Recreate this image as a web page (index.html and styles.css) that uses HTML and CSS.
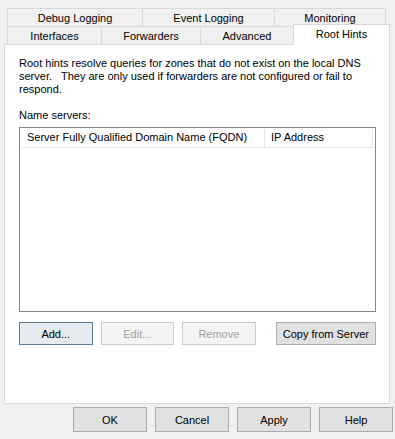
FILE: index.html
```
<!DOCTYPE html>
<html lang="en">
<head>
  <meta charset="UTF-8" />
  <title>Root Hints</title>
  <link rel="stylesheet" href="styles.css">
</head>
<body>
  <div class="dialog">
    <div class="tabs">
      <div class="tab-row back">
        <div class="tab w-debug">Debug Logging</div>
        <div class="tab w-event">Event Logging</div>
        <div class="tab w-monitor">Monitoring</div>
      </div>
      <div class="tab-row front">
        <div class="tab w-ifaces">Interfaces</div>
        <div class="tab w-fwd">Forwarders</div>
        <div class="tab w-adv">Advanced</div>
        <div class="tab w-root selected">Root Hints</div>
      </div>
    </div>

    <div class="panel">
      <p class="intro">Root hints resolve queries for zones that do not exist on the local DNS server.&nbsp;&nbsp; They are only used if forwarders are not configured or fail to respond.</p>
      <div class="label">Name servers:</div>
      <div class="listbox">
        <div class="list-head">
          <div class="col col-fqdn">Server Fully Qualified Domain Name (FQDN)</div>
          <div class="col col-ip">IP Address</div>
        </div>
      </div>
      <div class="list-buttons">
        <button class="btn focused">Add...</button>
        <button class="btn" disabled>Edit...</button>
        <button class="btn" disabled>Remove</button>
        <button class="btn wide">Copy from Server</button>
      </div>
    </div>

    <div class="footer">
      <button class="btn big">OK</button>
      <button class="btn big">Cancel</button>
      <button class="btn big">Apply</button>
      <button class="btn big">Help</button>
    </div>
  </div>
</body>
</html>
```

FILE: styles.css
```
body {
  margin: 0;
  background: #f0f0f0;
  font-family: "Liberation Sans", Arial, sans-serif;
  font-size: 11px;
  color: #000;
}
.dialog {
  width: 395px;
  height: 439px;
  padding-top: 8px;
  box-sizing: border-box;
}
.tabs {
  padding-left: 7px;
}
.tab-row {
  display: flex;
  height: 18px;
}
.tab {
  box-sizing: border-box;
  height: 18px;
  border: 1px solid #d9d9d9;
  border-bottom: none;
  margin-right: -1px;
  background: #f0f0f0;
  text-align: center;
  line-height: 18px;
  white-space: nowrap;
}
.w-debug { width: 136px; }
.w-event { width: 133px; }
.w-monitor { width: 112px; }
.w-ifaces { width: 95px; }
.w-fwd { width: 100px; }
.w-adv { width: 94px; }
.w-root { width: 97px; }
.tab.selected {
  position: relative;
  z-index: 2;
  height: 21px;
  margin-top: -2px;
  margin-bottom: -1px;
  background: #fff;
  line-height: 19px;
}
.panel {
  margin-left: 4px;
  width: 386px;
  height: 360px;
  box-sizing: border-box;
  border: 1px solid #d9d9d9;
  background: #fff;
  padding: 12px 13px 0 14px;
}
.intro {
  margin: 0;
  line-height: 13px;
  padding-right: 10px;
}
.label {
  margin-top: 13px;
  line-height: 13px;
}
.listbox {
  margin-top: 5px;
  width: 357px;
  height: 185px;
  box-sizing: border-box;
  border: 1px solid #828790;
  padding: 1px;
}
.list-head {
  display: flex;
  height: 18px;
  border-bottom: 1px solid #e5e5e5;
}
.col {
  line-height: 17px;
  padding-left: 6px;
  box-sizing: border-box;
  white-space: nowrap;
}
.col-fqdn {
  width: 244px;
  border-right: 1px solid #e5e5e5;
}
.col-ip {
  width: 108px;
  border-right: 1px solid #e5e5e5;
}
.list-buttons {
  display: flex;
  margin-top: 10px;
  gap: 8px;
}
.btn {
  font-family: inherit;
  font-size: 11px;
  width: 74px;
  height: 23px;
  box-sizing: border-box;
  border: 1px solid #adadad;
  background: #e1e1e1;
  color: #000;
  padding: 0;
}
.btn.focused {
  border-color: #5c7f99;
  background: #e5eaee;
}
.btn:disabled {
  border-color: #cccccc;
  background: #f4f4f4;
  color: #a0a0a0;
}
.btn.wide {
  width: 101px;
  margin-left: 12px;
}
.footer {
  display: flex;
  gap: 8px;
  padding-left: 73px;
  margin-top: 3px;
}
.btn.big {
  height: 25px;
  width: 74px;
}
```
